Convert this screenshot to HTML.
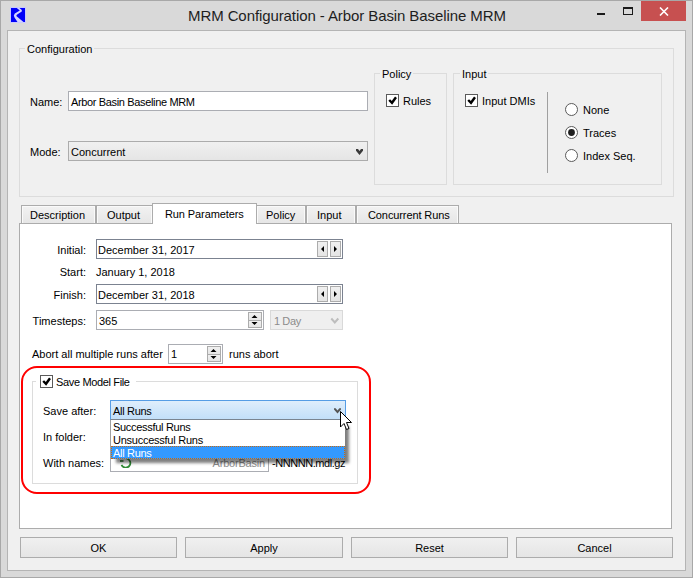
<!DOCTYPE html>
<html><head><meta charset="utf-8">
<style>
*{box-sizing:border-box;margin:0;padding:0}
html,body{width:693px;height:578px;overflow:hidden}
body{position:relative;background:#d9d9d9;font-family:"Liberation Sans",sans-serif;font-size:11px;color:#000}
.a{position:absolute}
.t{position:absolute;line-height:13px;white-space:pre}
.frame{left:0;top:0;width:693px;height:578px;border:1px solid #a8a8a8}
.client{left:7px;top:30px;width:679px;height:541px;border:1px solid #b4b4b4;background:#f0f0f0}
.grp{position:absolute;border:1px solid #dcdcdc}
.gt{position:absolute;line-height:13px;white-space:pre;background:#f0f0f0;padding:0 2px}
.fld{position:absolute;background:#fff;border:1px solid #abadb3}
.cb{position:absolute;width:13px;height:13px;border:1px solid #5a5a5a;background:#fff}
.btn{position:absolute;border:1px solid #acacac;background:linear-gradient(#f0f0f0,#e5e5e5);text-align:center;line-height:19px;padding-top:1px}
.tab{position:absolute;border:1px solid #acacac;border-bottom:none;background:linear-gradient(#f2f2f2,#e6e6e6);box-shadow:inset 1px 1px 0 #fafafa,inset -1px 0 0 #fafafa}
.sb{position:absolute;border:1px solid #acacac;background:linear-gradient(#f0f0f0,#e5e5e5)}
</style></head><body>
<div class="a frame"></div>
<!-- title icon -->
<svg class="a" style="left:10px;top:7px" width="16" height="16" viewBox="0 0 16 16">
<rect x="0.5" y="0.5" width="15" height="15" fill="#0000f8" stroke="#c8c8ff" stroke-width="1"/>
<path d="M6.8,1 L9.8,3.5 L4.8,6.5 L3.8,8.5 L4.5,10.5 L7.5,15 L13.5,15 L6.3,9 L6.8,7.8 L11.8,4.5 L11.8,3 L9.5,1 Z" fill="#d4d4ff"/>
</svg>
<div class="t" style="left:188px;top:7px;font-size:15px;line-height:18px;color:#1e1e1e;letter-spacing:-0.09px">MRM Configuration - Arbor Basin Baseline MRM</div>
<!-- min -->
<div class="a" style="left:597px;top:13px;width:8px;height:2px;background:#1a1a1a"></div>
<!-- max -->
<div class="a" style="left:623px;top:7px;width:10px;height:8px;border:1px solid #1a1a1a;border-top-width:2px"></div>
<!-- close -->
<div class="a" style="left:641px;top:1px;width:45px;height:20px;background:#c75050"></div>
<svg class="a" style="left:659px;top:7px" width="10" height="9" viewBox="0 0 10 9"><path d="M1,0.5 L9,8.5 M9,0.5 L1,8.5" stroke="#fff" stroke-width="1.6"/></svg>

<div class="a client"></div>

<!-- Configuration group -->
<div class="grp" style="left:19px;top:48px;width:655px;height:149px"></div>
<div class="gt" style="left:25px;top:43px">Configuration</div>
<div class="t" style="left:30px;top:96px">Name:</div>
<div class="fld" style="left:68px;top:91px;width:300px;height:20px"></div>
<div class="t" style="left:71px;top:96px;letter-spacing:-0.35px">Arbor Basin Baseline MRM</div>
<div class="t" style="left:30px;top:146px">Mode:</div>
<div class="sb" style="left:68px;top:141px;width:300px;height:20px"></div>
<div class="t" style="left:71px;top:146px">Concurrent</div>
<svg class="a" style="left:355px;top:148px" width="9" height="8" viewBox="0 0 9 8"><path d="M1,1 L3,1 L4.5,3 L6,1 L8,1 L8,2.8 L4.5,7 L1,2.8 Z" fill="#3a3a3a"/></svg>

<!-- Policy group -->
<div class="grp" style="left:374px;top:73px;width:73px;height:112px"></div>
<div class="gt" style="left:380px;top:68px">Policy</div>
<div class="cb" style="left:386px;top:94px"></div>
<svg class="a" style="left:386px;top:94px" width="13" height="13" viewBox="0 0 13 13"><path d="M3.2,6 L6,8.8 L10,3.2" stroke="#000" stroke-width="2.4" fill="none"/></svg>
<div class="t" style="left:403px;top:95px">Rules</div>

<!-- Input group -->
<div class="grp" style="left:453px;top:73px;width:209px;height:112px"></div>
<div class="gt" style="left:460px;top:68px">Input</div>
<div class="cb" style="left:465px;top:94px"></div>
<svg class="a" style="left:465px;top:94px" width="13" height="13" viewBox="0 0 13 13"><path d="M3.2,6 L6,8.8 L10,3.2" stroke="#000" stroke-width="2.4" fill="none"/></svg>
<div class="t" style="left:482px;top:95px">Input DMIs</div>
<div class="a" style="left:547px;top:92px;width:1px;height:81px;background:#a0a0a0"></div>
<svg class="a" style="left:565px;top:103px" width="13" height="59" viewBox="0 0 13 59">
<circle cx="6.5" cy="6.5" r="6" fill="#fff" stroke="#5a5a5a"/>
<circle cx="6.5" cy="29.5" r="6" fill="#fff" stroke="#5a5a5a"/>
<circle cx="6.5" cy="29.5" r="3.4" fill="#1e1e1e"/>
<circle cx="6.5" cy="52.5" r="6" fill="#fff" stroke="#5a5a5a"/>
</svg>
<div class="t" style="left:583px;top:104px">None</div>
<div class="t" style="left:583px;top:127px">Traces</div>
<div class="t" style="left:583px;top:150px">Index Seq.</div>

<!-- Tabs -->
<div class="a" style="left:19px;top:223px;width:653px;height:306px;background:#fff;border:1px solid #acacac"></div>
<div class="tab" style="left:21px;top:205px;width:75px;height:18px"></div>
<div class="t" style="left:30px;top:209px">Description</div>
<div class="tab" style="left:96px;top:205px;width:57px;height:18px"></div>
<div class="t" style="left:107px;top:209px">Output</div>
<div class="tab" style="left:256px;top:205px;width:50px;height:18px"></div>
<div class="t" style="left:266px;top:209px">Policy</div>
<div class="tab" style="left:306px;top:205px;width:50px;height:18px"></div>
<div class="t" style="left:317px;top:209px">Input</div>
<div class="tab" style="left:356px;top:205px;width:103px;height:18px"></div>
<div class="t" style="left:368px;top:209px;letter-spacing:-0.1px">Concurrent Runs</div>
<div class="a" style="left:152px;top:203px;width:105px;height:21px;background:#fff;border:1px solid #acacac;border-bottom:none"></div>
<div class="t" style="left:165px;top:208px;letter-spacing:-0.1px">Run Parameters</div>

<!-- Run parameters content -->
<div class="t" style="left:36px;top:244px;width:50px;text-align:right">Initial:</div>
<div class="fld" style="left:96px;top:239px;width:247px;height:20px;border-color:#7b8290"></div>
<div class="t" style="left:98px;top:244px">December 31, 2017</div>
<div class="sb" style="left:317px;top:241px;width:11px;height:16px"></div>
<div class="sb" style="left:330px;top:241px;width:11px;height:16px"></div>
<svg class="a" style="left:317px;top:241px" width="24" height="16" viewBox="0 0 24 16"><path d="M7,5 L7,11 L4,8 Z M17,5 L17,11 L20,8 Z" fill="#000"/></svg>

<div class="t" style="left:36px;top:266px;width:50px;text-align:right">Start:</div>
<div class="t" style="left:96px;top:266px">January 1, 2018</div>

<div class="t" style="left:36px;top:289px;width:50px;text-align:right">Finish:</div>
<div class="fld" style="left:96px;top:284px;width:247px;height:20px;border-color:#7b8290"></div>
<div class="t" style="left:98px;top:289px">December 31, 2018</div>
<div class="sb" style="left:317px;top:286px;width:11px;height:16px"></div>
<div class="sb" style="left:330px;top:286px;width:11px;height:16px"></div>
<svg class="a" style="left:317px;top:286px" width="24" height="16" viewBox="0 0 24 16"><path d="M7,5 L7,11 L4,8 Z M17,5 L17,11 L20,8 Z" fill="#000"/></svg>

<div class="t" style="left:20px;top:315px;width:66px;text-align:right">Timesteps:</div>
<div class="fld" style="left:96px;top:310px;width:168px;height:20px"></div>
<div class="t" style="left:99px;top:315px">365</div>
<div class="sb" style="left:248px;top:312px;width:14px;height:9px"></div>
<div class="sb" style="left:248px;top:320px;width:14px;height:8px"></div>
<svg class="a" style="left:248px;top:312px" width="14" height="16" viewBox="0 0 14 16"><path d="M3.5,6 L9.5,6 L6.5,3 Z M3.5,10 L9.5,10 L6.5,13 Z" fill="#000"/></svg>
<div class="a" style="left:270px;top:310px;width:73px;height:20px;border:1px solid #d9d9d9;background:#efefef"></div>
<div class="t" style="left:274px;top:315px;color:#8c8c8c;letter-spacing:-0.4px">1 Day</div>
<svg class="a" style="left:330px;top:317px" width="10" height="8" viewBox="0 0 10 8"><path d="M1.3,1.5 L4.8,5.5 L8.3,1.5" stroke="#bdbdbd" stroke-width="2" fill="none"/></svg>

<div class="t" style="left:32px;top:348px">Abort all multiple runs after</div>
<div class="fld" style="left:168px;top:344px;width:55px;height:20px"></div>
<div class="t" style="left:171px;top:348px">1</div>
<div class="sb" style="left:207px;top:346px;width:14px;height:9px"></div>
<div class="sb" style="left:207px;top:354px;width:14px;height:8px"></div>
<svg class="a" style="left:207px;top:346px" width="14" height="16" viewBox="0 0 14 16"><path d="M3.5,6 L9.5,6 L6.5,3 Z M3.5,10 L9.5,10 L6.5,13 Z" fill="#000"/></svg>
<div class="t" style="left:229px;top:348px">runs abort</div>

<!-- Save model file group -->
<div class="grp" style="left:32px;top:381px;width:326px;height:103px;border-color:#dcdcdc"></div>
<div class="a" style="left:36px;top:375px;width:100px;height:13px;background:#fff"></div>
<div class="cb" style="left:40px;top:375px"></div>
<svg class="a" style="left:40px;top:375px" width="13" height="13" viewBox="0 0 13 13"><path d="M3.2,6 L6,8.8 L10,3.2" stroke="#000" stroke-width="2.4" fill="none"/></svg>
<div class="t" style="left:56px;top:376px;letter-spacing:-0.35px">Save Model File</div>

<div class="t" style="left:43px;top:405px">Save after:</div>
<div class="t" style="left:43px;top:431px">In folder:</div>
<div class="t" style="left:43px;top:457px">With names:</div>
<div class="fld" style="left:110px;top:452px;width:159px;height:20px"></div>
<svg class="a" style="left:116px;top:454px" width="16" height="14" viewBox="0 0 16 14"><path d="M10.5,4.5 A4.6,4.6 0 1 1 5.5,10.8" stroke="#2f8a35" stroke-width="1.7" fill="none"/><path d="M4,7 L7.5,7" stroke="#1f6f25" stroke-width="1.5"/></svg>
<div class="t" style="left:150px;top:457px;width:115px;text-align:right;color:#8c8c8c;letter-spacing:-0.2px">ArborBasin</div>
<div class="t" style="left:272px;top:457px;letter-spacing:-0.45px">-NNNNN.mdl.gz</div>

<div class="a" style="left:110px;top:400px;width:236px;height:20px;border:1px solid #569de5;border-bottom-color:#7a8490;background:linear-gradient(#dfeefc,#c2dff9)"></div>
<div class="t" style="left:113px;top:405px;letter-spacing:-0.3px">All Runs</div>
<svg class="a" style="left:333px;top:407px" width="9" height="8" viewBox="0 0 9 8"><path d="M1,1.2 L2.6,1.2 L4.5,3.6 L6.4,1.2 L8,1.2 L8,2.4 L4.5,6.6 L1,2.4 Z" fill="#555"/></svg>

<!-- popup -->
<div class="a" style="left:116px;top:426px;width:233px;height:37px;background:rgba(0,0,0,0.5);filter:blur(1.6px)"></div>
<div class="a" style="left:110px;top:420px;width:235px;height:39px;background:#fff;border-left:1px solid #a0a0a0"></div>
<div class="t" style="left:113px;top:421px;letter-spacing:-0.3px">Successful Runs</div>
<div class="t" style="left:113px;top:434px;letter-spacing:-0.25px">Unsuccessful Runs</div>
<div class="a" style="left:111px;top:446px;width:234px;height:13px;background:#3399ff;border:1px dotted #c86a10"></div>
<div class="t" style="left:113px;top:447px;color:#fff;letter-spacing:-0.3px">All Runs</div>

<!-- red highlight -->
<div class="a" style="left:21px;top:366px;width:350px;height:128px;border:2px solid #ff0000;border-radius:16px"></div>

<!-- cursor -->
<svg class="a" style="left:339px;top:410px" width="14" height="21" viewBox="0 0 14 21">
<path d="M1.5,1.5 L1.5,17 L5,13.5 L7.5,19.5 L10,18.5 L7.5,12.5 L12.5,12.5 Z" fill="#fff" stroke="#000" stroke-width="1"/>
</svg>

<!-- buttons -->
<div class="btn" style="left:20px;top:537px;width:157px;height:21px">OK</div>
<div class="btn" style="left:185px;top:537px;width:158px;height:21px">Apply</div>
<div class="btn" style="left:351px;top:537px;width:157px;height:21px">Reset</div>
<div class="btn" style="left:516px;top:537px;width:157px;height:21px">Cancel</div>
</body></html>
